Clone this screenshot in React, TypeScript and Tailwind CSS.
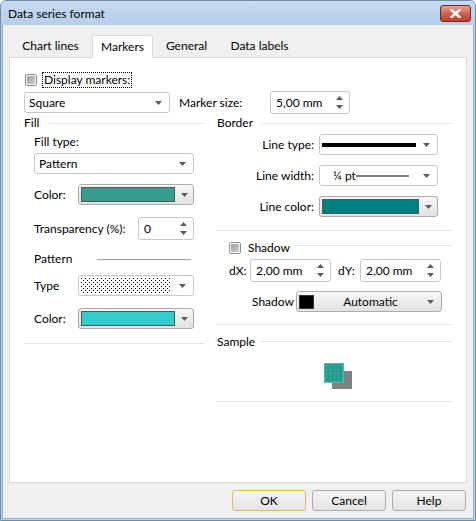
import React from "react";

function Arrow() {
  return (
    <svg width="7" height="4" viewBox="0 0 7 4" className="shrink-0">
      <path d="M0 0H7L3.5 4Z" fill="#5c5c5c" />
    </svg>
  );
}

function SpinArrows() {
  return (
    <div className="flex flex-col gap-[5px] shrink-0">
      <svg width="7" height="4" viewBox="0 0 7 4">
        <path d="M0 4H7L3.5 0Z" fill="#5c5c5c" />
      </svg>
      <svg width="7" height="4" viewBox="0 0 7 4">
        <path d="M0 0H7L3.5 4Z" fill="#5c5c5c" />
      </svg>
    </div>
  );
}

function Spin({ value, w }: { value: string; w: string }) {
  return (
    <div
      className={`flex items-center justify-between h-[23px] ${w} bg-white border border-[#c8c8c8] rounded-[3px] pl-[5px] pr-[6px] shrink-0`}
    >
      <span>{value}</span>
      <SpinArrows />
    </div>
  );
}

function CheckBox() {
  return (
    <div className="w-[12px] h-[12px] border border-[#8e8f8f] rounded-[2px] bg-[#f4f4f4] flex items-center justify-center shrink-0">
      <div className="w-[8px] h-[8px] rounded-[1px] bg-linear-to-br from-[#a2a2a2] to-[#cdcdcd]" />
    </div>
  );
}

function ColorCombo({ color, swatchW }: { color: string; swatchW: string }) {
  return (
    <div className="flex items-center h-[21px] w-full border border-[#acacac] rounded-[3px] bg-linear-to-b from-[#f6f6f6] to-[#e2e2e2]">
      <div className={`ml-[2px] ${swatchW} h-[15px] border border-[#555555]`} style={{ backgroundColor: color }} />
      <div className="flex-1 flex justify-center">
        <Arrow />
      </div>
    </div>
  );
}

function Header({ label, lineClass }: { label: string; lineClass?: string }) {
  return (
    <div className="flex items-center h-[16px]">
      <span>{label}</span>
      <div className={`flex-1 h-px bg-[#e6e6e6] ${lineClass ?? "ml-[8px]"}`} />
    </div>
  );
}

function Dots() {
  return (
    <svg width="90" height="15" className="ml-[2px]">
      <defs>
        <pattern id="dp" width="4" height="4" patternUnits="userSpaceOnUse">
          <rect x="0" y="0" width="1" height="1" fill="#000" />
          <rect x="2" y="2" width="1" height="1" fill="#000" />
        </pattern>
      </defs>
      <rect x="0" y="0" width="90" height="15" fill="url(#dp)" />
    </svg>
  );
}

export default function App() {
  return (
    <div className="w-[476px] h-[521px] flex flex-col border border-[#6f8caa] bg-[#bcd4ec] rounded-t-[6px] text-[12px] leading-[16px] text-black font-['Lato',sans-serif] overflow-hidden">
      {/* Title bar */}
      <div className="h-[24px] flex items-start justify-between pl-[7px] pr-[4px] bg-linear-to-b from-[#c6daf0] to-[#b6cee9]">
        <span className="mt-[5px]">Data series format</span>
        <div className="mt-[4px] w-[31px] h-[17px] rounded-[3px] border border-[#6b2a22] bg-linear-to-b from-[#e6a194] via-[#d0614e] to-[#c0412d] flex items-center justify-center">
          <svg width="11" height="9" viewBox="0 0 11 9">
            <path d="M1.5 1L9.5 8M9.5 1L1.5 8" stroke="#ffffff" strokeWidth="2.4" strokeLinecap="square" />
          </svg>
        </div>
      </div>

      {/* Body */}
      <div className="flex-1 mx-[1px] mb-[1px] bg-[#f0f0f0] border border-t-0 border-[#8fb1d6] flex flex-col">
        {/* Tabs */}
        <div className="mt-[10px] ml-[6px] flex items-start h-[22px]">
          <div className="w-[83px] h-[22px] flex items-center justify-center">Chart lines</div>
          <div className="w-[61px] h-[23px] flex items-center justify-center bg-white border border-b-0 border-[#d9d9d9] rounded-t-[2px] relative z-10">
            Markers
          </div>
          <div className="w-[67px] h-[22px] flex items-center justify-center">General</div>
          <div className="w-[79px] h-[22px] flex items-center justify-center">Data labels</div>
        </div>

        {/* Panel */}
        <div className="ml-[6px] w-[458px] h-[426px] bg-white border border-[#d9d9d9] flex flex-col">
          {/* Display markers */}
          <div className="mt-[14px] h-[16px] flex items-center pl-[15px]">
            <CheckBox />
            <span className="ml-[5px] border border-dotted border-black px-px leading-[14px]">Display markers:</span>
          </div>

          {/* Square + marker size */}
          <div className="mt-[3px] h-[23px] flex items-center pl-[14px]">
            <div className="flex items-center justify-between h-[21px] w-[146px] bg-white border border-[#c8c8c8] rounded-[3px] pl-[4px] pr-[7px]">
              <span>Square</span>
              <Arrow />
            </div>
            <span className="ml-[9px] w-[91px]">Marker size:</span>
            <Spin value="5,00 mm" w="w-[80px]" />
          </div>

          {/* Two columns */}
          <div className="flex pl-[14px] gap-[12px]">
            {/* Left column */}
            <div className="w-[181px] flex flex-col">
              <div className="mt-[1px]">
                <Header label="Fill" />
              </div>
              <div className="mt-[3px] h-[16px] pl-[10px]">Fill type:</div>
              <div className="mt-[3px] ml-[10px] w-[160px] flex items-center justify-between h-[21px] bg-white border border-[#c8c8c8] rounded-[3px] pl-[4px] pr-[7px]">
                <span>Pattern</span>
                <Arrow />
              </div>
              <div className="mt-[10px] h-[21px] flex items-center pl-[10px]">
                <span className="w-[44px]">Color:</span>
                <div className="w-[116px]">
                  <ColorCombo color="#359d8e" swatchW="w-[94px]" />
                </div>
              </div>
              <div className="mt-[12px] h-[23px] flex items-center pl-[10px]">
                <span className="w-[104px]">Transparency (%):</span>
                <Spin value="0" w="w-[56px]" />
              </div>
              <div className="mt-[11px] h-[16px] flex items-center pl-[10px]">
                <span className="w-[63px]">Pattern</span>
                <div className="w-[94px] h-px bg-[#a0a0a0]" />
              </div>
              <div className="mt-[8px] h-[21px] flex items-center pl-[10px]">
                <span className="w-[44px]">Type</span>
                <div className="w-[116px] flex items-center h-[21px] bg-white border border-[#c8c8c8] rounded-[3px] pr-[7px]">
                  <Dots />
                  <div className="flex-1" />
                  <Arrow />
                </div>
              </div>
              <div className="mt-[12px] h-[21px] flex items-center pl-[10px]">
                <span className="w-[44px]">Color:</span>
                <div className="w-[116px]">
                  <ColorCombo color="#33cbcb" swatchW="w-[94px]" />
                </div>
              </div>
              <div className="mt-[14px] h-px bg-[#e6e6e6]" />
            </div>

            {/* Right column */}
            <div className="w-[236px] flex flex-col">
              <div className="mt-[1px]">
                <Header label="Border" />
              </div>
              <div className="mt-[3px] h-[21px] flex items-center">
                <span className="w-[97px] text-right">Line type:</span>
                <div className="ml-[5px] w-[119px] flex items-center h-[21px] bg-white border border-[#c8c8c8] rounded-[3px] pl-[2px] pr-[7px]">
                  <div className="w-[94px] h-[4px] bg-black" />
                  <div className="flex-1" />
                  <Arrow />
                </div>
              </div>
              <div className="mt-[10px] h-[21px] flex items-center">
                <span className="w-[97px] text-right">Line width:</span>
                <div className="ml-[5px] w-[119px] flex items-center h-[21px] bg-white border border-[#c8c8c8] rounded-[3px] pl-[13px] pr-[7px]">
                  <span>¼ pt</span>
                  <div className="w-[53px] h-[2px] bg-[#7f7f7f]" />
                  <div className="flex-1" />
                  <Arrow />
                </div>
              </div>
              <div className="mt-[10px] h-[21px] flex items-center">
                <span className="w-[97px] text-right">Line color:</span>
                <div className="ml-[5px] w-[119px]">
                  <ColorCombo color="#008080" swatchW="w-[97px]" />
                </div>
              </div>
              <div className="mt-[13px] h-px bg-[#e6e6e6]" />
              <div className="mt-[9px] h-[16px] flex items-center pl-[12px]">
                <CheckBox />
                <span className="ml-[7px]">Shadow</span>
                <div className="ml-[5px] flex-1 h-px bg-[#e6e6e6] -mt-[5px]" />
              </div>
              <div className="mt-[3px] h-[23px] flex items-center pl-[12px]">
                <span className="w-[21px]">dX:</span>
                <Spin value="2,00 mm" w="w-[81px]" />
                <span className="ml-[7px] w-[22px]">dY:</span>
                <Spin value="2,00 mm" w="w-[81px]" />
              </div>
              <div className="mt-[9px] h-[21px] flex items-center pl-[35px]">
                <span className="w-[44px]">Shadow</span>
                <div className="w-[146px] flex items-center h-[21px] border border-[#acacac] rounded-[3px] bg-linear-to-b from-[#f6f6f6] to-[#e2e2e2] pr-[7px]">
                  <div className="ml-[2px] w-[15px] h-[14px] bg-black border border-[#333]" />
                  <span className="flex-1 text-center">Automatic</span>
                  <Arrow />
                </div>
              </div>
              <div className="mt-[12px] h-px bg-[#e6e6e6]" />
              <div className="mt-[9px]">
                <Header label="Sample" lineClass="ml-[5px] -mt-[2px]" />
              </div>
              <div className="mt-[13px] ml-[107px] relative w-[28px] h-[26px]">
                <div className="absolute left-[8px] top-[8px] w-[20px] h-[18px] bg-[#808080]" />
                <div className="absolute left-0 top-0 w-[20px] h-[20px] border border-[#58b7ad] bg-[#2a9c8e]">
                  <svg width="18" height="18" className="block">
                    <defs>
                      <pattern id="sd" width="4" height="4" patternUnits="userSpaceOnUse">
                        <rect x="1" y="1" width="1" height="1" fill="#38d0cc" />
                      </pattern>
                    </defs>
                    <rect width="18" height="18" fill="url(#sd)" />
                  </svg>
                </div>
              </div>
              <div className="mt-[12px] h-px bg-[#e6e6e6]" />
            </div>
          </div>
        </div>

        {/* Buttons */}
        <div className="mt-[7px] ml-[229px] flex gap-[6px]">
          <div className="w-[74px] h-[21px] flex items-center justify-center rounded-[3px] border border-[#f0b35e] bg-linear-to-b from-[#f4f4f4] to-[#e4e4e4]">
            OK
          </div>
          <div className="w-[74px] h-[21px] flex items-center justify-center rounded-[3px] border border-[#acacac] bg-linear-to-b from-[#f4f4f4] to-[#e4e4e4]">
            Cancel
          </div>
          <div className="w-[74px] h-[21px] flex items-center justify-center rounded-[3px] border border-[#acacac] bg-linear-to-b from-[#f4f4f4] to-[#e4e4e4]">
            Help
          </div>
        </div>
      </div>
    </div>
  );
}
